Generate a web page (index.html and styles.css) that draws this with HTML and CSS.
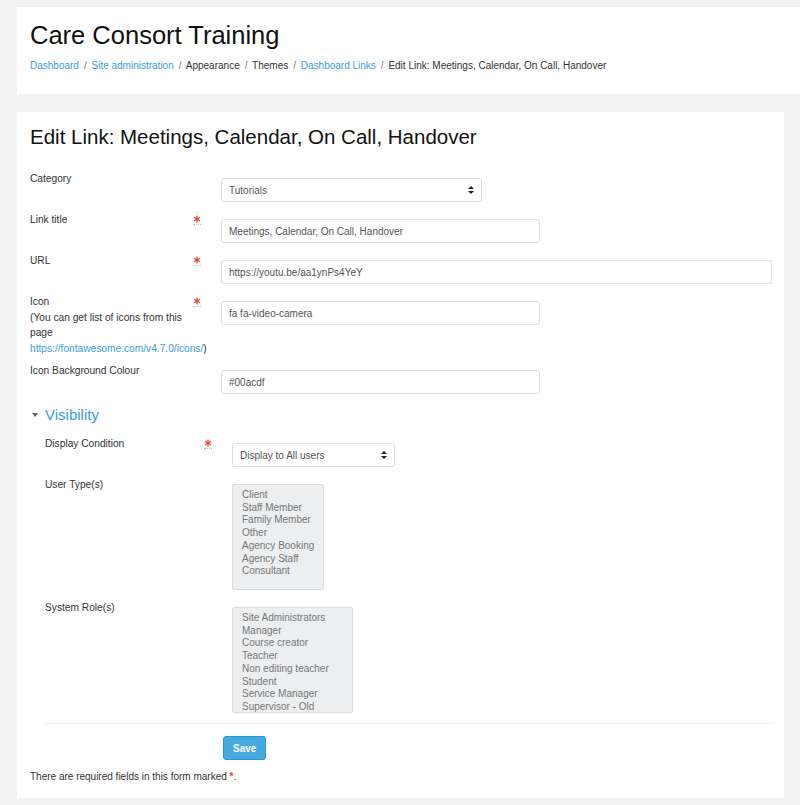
FILE: index.html
```html
<!DOCTYPE html>
<html lang="en">
<head>
  <meta charset="UTF-8">
  <title>Edit Link - Care Consort Training</title>
  <link rel="stylesheet" href="styles.css">
</head>
<body>
  <header class="page-header">
    <h1 class="site-name">Care Consort Training</h1>
    <nav class="breadcrumb">
      <a href="#">Dashboard</a><span class="sep">/</span>
      <a href="#">Site administration</a><span class="sep">/</span>
      <span>Appearance</span><span class="sep">/</span>
      <span>Themes</span><span class="sep">/</span>
      <a href="#">Dashboard Links</a><span class="sep">/</span>
      <span>Edit Link: Meetings, Calendar, On Call, Handover</span>
    </nav>
  </header>

  <main class="main-card">
    <h2 class="page-title">Edit Link: Meetings, Calendar, On Call, Handover</h2>

    <form class="link-form">
      <div class="form-row">
        <label class="form-label">Category</label>
        <span class="req"></span>
        <div class="form-field">
          <span class="select-wrap w-category">
            <select class="form-select"><option>Tutorials</option></select>
          </span>
        </div>
      </div>

      <div class="form-row">
        <label class="form-label">Link title</label>
        <span class="req"><svg class="req-icon" viewBox="0 0 8 8" width="8" height="8"><path d="M4 0.5V7.5M1 2.2L7 5.8M7 2.2L1 5.8"/></svg></span>
        <div class="form-field">
          <input class="form-input w-medium" type="text" value="Meetings, Calendar, On Call, Handover">
        </div>
      </div>

      <div class="form-row">
        <label class="form-label">URL</label>
        <span class="req"><svg class="req-icon" viewBox="0 0 8 8" width="8" height="8"><path d="M4 0.5V7.5M1 2.2L7 5.8M7 2.2L1 5.8"/></svg></span>
        <div class="form-field">
          <input class="form-input w-full" type="text" value="https://youtu.be/aa1ynPs4YeY">
        </div>
      </div>

      <div class="form-row row-tall">
        <label class="form-label">Icon<br>(You can get list of icons from this page <a href="#">https://fontawesome.com/v4.7.0/icons/</a>)</label>
        <span class="req"><svg class="req-icon" viewBox="0 0 8 8" width="8" height="8"><path d="M4 0.5V7.5M1 2.2L7 5.8M7 2.2L1 5.8"/></svg></span>
        <div class="form-field">
          <input class="form-input w-medium" type="text" value="fa fa-video-camera">
        </div>
      </div>

      <div class="form-row">
        <label class="form-label">Icon Background Colour</label>
        <span class="req"></span>
        <div class="form-field">
          <input class="form-input w-medium" type="text" value="#00acdf">
        </div>
      </div>

      <fieldset class="visibility">
        <legend class="section-toggle"><span class="caret"></span>Visibility</legend>

        <div class="form-row">
          <label class="form-label">Display Condition</label>
          <span class="req"><svg class="req-icon" viewBox="0 0 8 8" width="8" height="8"><path d="M4 0.5V7.5M1 2.2L7 5.8M7 2.2L1 5.8"/></svg></span>
          <div class="form-field">
            <span class="select-wrap w-display">
              <select class="form-select"><option>Display to All users</option></select>
            </span>
          </div>
        </div>

        <div class="form-row">
          <label class="form-label">User Type(s)</label>
          <span class="req"></span>
          <div class="form-field">
            <div class="multi-select w-types">
              <div>Client</div>
              <div>Staff Member</div>
              <div>Family Member</div>
              <div>Other</div>
              <div>Agency Booking</div>
              <div>Agency Staff</div>
              <div>Consultant</div>
            </div>
          </div>
        </div>

        <div class="form-row">
          <label class="form-label">System Role(s)</label>
          <span class="req"></span>
          <div class="form-field">
            <div class="multi-select w-roles">
              <div>Site Administrators</div>
              <div>Manager</div>
              <div>Course creator</div>
              <div>Teacher</div>
              <div>Non editing teacher</div>
              <div>Student</div>
              <div>Service Manager</div>
              <div>Supervisor - Old</div>
            </div>
          </div>
        </div>
      </fieldset>

      <div class="form-actions">
        <button class="btn-save" type="button">Save</button>
      </div>

      <p class="required-note">There are required fields in this form marked <span class="star">*</span>.</p>
    </form>
  </main>
</body>
</html>
```

FILE: styles.css
```css
body {
  font-family: "Liberation Sans", Arial, sans-serif;
  background-color: #f2f2f2;
  color: #333;
  margin: 0;
  padding: 7px 0 0 17px;
  font-size: 10px;
}

a {
  color: #3a9ddf;
  text-decoration: none;
}

.page-header {
  background-color: #fff;
  padding: 14px 13px 21px;
}

.site-name {
  font-size: 25.5px;
  font-weight: normal;
  color: #111;
  margin: 0 0 10px;
  line-height: 28px;
}

.breadcrumb {
  font-size: 10px;
  line-height: 14px;
  color: #333;
}

.breadcrumb .sep {
  color: #777;
  margin: 0 2px 0 5px;
}

.main-card {
  background-color: #fff;
  margin: 18px 16px 8px 0;
  padding: 13px 12px 14px 13px;
}

.page-title {
  font-size: 20.5px;
  font-weight: normal;
  color: #111;
  margin: 0 0 22px;
  line-height: 24px;
}

.form-row {
  display: flex;
  align-items: flex-start;
  margin-bottom: 10px;
}

.row-tall .form-label {
  margin-bottom: -3px;
}

.form-label {
  width: 163px;
  line-height: 15.5px;
  font-size: 10.2px;
  color: #333;
}

.req {
  width: 28px;
  padding-top: 3px;
  line-height: 0;
}

.req-icon {
  stroke: #e8392f;
  stroke-width: 1.2;
  fill: none;
  padding-bottom: 1px;
  border-bottom: 1px dotted #bbb;
}

.form-field {
  flex: 1;
  padding-top: 7px;
}

.form-input {
  box-sizing: border-box;
  height: 24px;
  border: 1px solid #ddd;
  border-radius: 3px;
  padding: 0 7px;
  font-family: inherit;
  font-size: 10px;
  color: #555;
  display: block;
}

.w-medium { width: 319px; }
.w-full { width: 100%; }

.select-wrap {
  position: relative;
  display: block;
}

.w-category { width: 261px; }
.w-display { width: 163px; }

.form-select {
  appearance: none;
  -webkit-appearance: none;
  box-sizing: border-box;
  width: 100%;
  height: 24px;
  border: 1px solid #ddd;
  border-radius: 3px;
  padding: 0 7px;
  background: #fff;
  font-family: inherit;
  font-size: 10px;
  color: #555;
}

.select-wrap::before,
.select-wrap::after {
  content: "";
  position: absolute;
  right: 8px;
  border-left: 3px solid transparent;
  border-right: 3px solid transparent;
  pointer-events: none;
}

.select-wrap::before {
  top: 8px;
  border-bottom: 3px solid #222;
}

.select-wrap::after {
  top: 13px;
  border-top: 3px solid #222;
}

.visibility {
  border: 0;
  margin: 0;
  padding: 0 0 0 15px;
}

.section-toggle {
  padding: 0;
  margin-left: -15px;
  font-size: 15px;
  color: #3a9ddf;
  line-height: 22px;
  margin-bottom: 10px;
}

.caret {
  display: inline-block;
  border-left: 3.5px solid transparent;
  border-right: 3.5px solid transparent;
  border-top: 4px solid #666;
  margin: 0 7px 3px 2px;
  vertical-align: middle;
}

.visibility .form-label {
  width: 159px;
}

.visibility .form-row:last-child {
  margin-bottom: 0;
  padding-bottom: 10px;
  border-bottom: 1px solid #eee;
}

.multi-select {
  box-sizing: border-box;
  background-color: #eceef0;
  border: 1px solid #ddd;
  border-radius: 2px;
  padding: 4px 9px;
  color: #777;
  font-size: 10px;
  line-height: 12.7px;
  height: 106px;
  overflow: hidden;
  white-space: nowrap;
}

.w-types { width: 92px; }
.w-roles { width: 121px; }

.form-actions {
  padding: 12px 0 0 193px;
}

.btn-save {
  background-color: #45aadf;
  border: 1px solid #2d93cb;
  border-radius: 3px;
  color: #fff;
  font-family: inherit;
  font-weight: bold;
  font-size: 10px;
  height: 24px;
  padding: 0 9px;
}

.required-note {
  margin: 10px 0 0;
  line-height: 14px;
  color: #333;
}

.required-note .star {
  color: #e8392f;
  font-weight: bold;
}
```
